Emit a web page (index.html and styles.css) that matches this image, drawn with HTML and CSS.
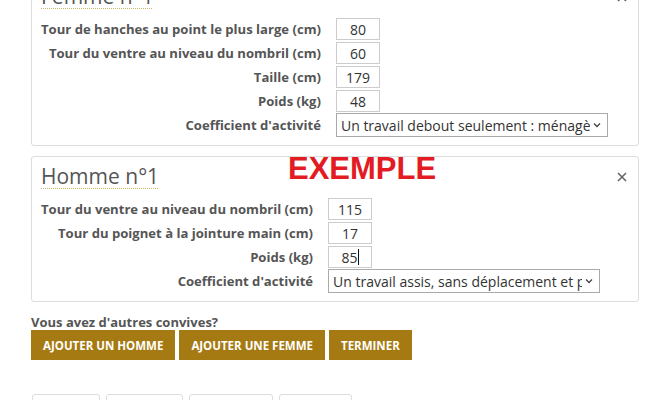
FILE: index.html
```html
<!DOCTYPE html>
<html lang="fr">
<head>
<meta charset="utf-8">
<title>Convives</title>
<link rel="stylesheet" href="styles.css">
</head>
<body>
<main class="page">
  <section class="card card-first">
    <h2 class="title"><span class="title-text">Femme n°1</span></h2>
    <span class="close"><svg width="10" height="10" viewBox="0 0 10 10"><path d="M1 1L9 9M9 1L1 9" stroke="#666" stroke-width="1.6" fill="none"/></svg></span>
    <table class="fields">
      <tr><td class="lbl">Tour de hanches au point le plus large (cm)</td><td><span class="num">80</span></td></tr>
      <tr><td class="lbl">Tour du ventre au niveau du nombril (cm)</td><td><span class="num">60</span></td></tr>
      <tr><td class="lbl">Taille (cm)</td><td><span class="num">179</span></td></tr>
      <tr><td class="lbl">Poids (kg)</td><td><span class="num">48</span></td></tr>
      <tr><td class="lbl">Coefficient d'activité</td><td><span class="select"><span class="select-text">Un travail debout seulement : ménagère, vendeur</span><svg class="chev" width="8" height="6" viewBox="0 0 8 6"><path d="M1 1.5L4 4.5L7 1.5" stroke="#444" stroke-width="1.3" fill="none"/></svg></span></td></tr>
    </table>
  </section>

  <section class="card">
    <h2 class="title"><span class="title-text">Homme n°1</span></h2>
    <span class="stamp">EXEMPLE</span>
    <span class="close"><svg width="10" height="10" viewBox="0 0 10 10"><path d="M1 1L9 9M9 1L1 9" stroke="#666" stroke-width="1.6" fill="none"/></svg></span>
    <table class="fields">
      <tr><td class="lbl">Tour du ventre au niveau du nombril (cm)</td><td><span class="num">115</span></td></tr>
      <tr><td class="lbl">Tour du poignet à la jointure main (cm)</td><td><span class="num">17</span></td></tr>
      <tr><td class="lbl">Poids (kg)</td><td><span class="num">85<span class="caret"></span></span></td></tr>
      <tr><td class="lbl">Coefficient d'activité</td><td><span class="select"><span class="select-text">Un travail assis, sans déplacement et peu d'effort</span><svg class="chev" width="8" height="6" viewBox="0 0 8 6"><path d="M1 1.5L4 4.5L7 1.5" stroke="#444" stroke-width="1.3" fill="none"/></svg></span></td></tr>
    </table>
  </section>

  <p class="more">Vous avez d'autres convives?</p>
  <div class="actions">
    <span class="btn">AJOUTER UN HOMME</span>
    <span class="btn">AJOUTER UNE FEMME</span>
    <span class="btn">TERMINER</span>
  </div>

  <div class="tabs">
    <span class="tab t1"></span>
    <span class="tab t2"></span>
    <span class="tab t3"></span>
    <span class="tab t4"></span>
  </div>
</main>
</body>
</html>
```

FILE: styles.css
```css
* { box-sizing: border-box; }
html, body { margin: 0; padding: 0; background: #fff; }
body {
  font-family: "Open Sans", "Noto Sans", sans-serif;
  color: #555;
  width: 660px;
  height: 400px;
  overflow: hidden;
}
.page {
  padding-left: 31px;
  width: 639px;
}
.card {
  position: relative;
  border: 1px solid #ddd;
  border-radius: 3px;
  padding: 4px 9px 8px 9px;
  margin-bottom: 10px;
}
.card-first { margin-top: -24px; }
.title {
  margin: 0 0 6px 0;
  font-size: 21px;
  line-height: 30px;
  font-weight: 400;
  color: #555;
}
.title-text {
  text-decoration: underline dotted #cbb865;
  text-decoration-thickness: 1px;
  text-underline-offset: 4px;
}
.close {
  position: absolute;
  top: 15px;
  right: 11px;
  width: 10px;
  height: 10px;
  display: block;
}
.close svg { display: block; }
.stamp {
  position: absolute;
  left: 256px;
  top: -4px;
  font-family: "Liberation Sans", Arial, sans-serif;
  font-weight: 700;
  font-size: 31px;
  line-height: 31px;
  color: #e31b23;
}
.fields {
  border-collapse: collapse;
}
.fields td {
  padding: 0;
  height: 24px;
  vertical-align: middle;
}
.fields .lbl {
  text-align: right;
  padding-right: 15px;
  font-weight: 700;
  font-size: 13.1px;
  color: #555;
  white-space: nowrap;
}
.num {
  display: flex;
  align-items: center;
  justify-content: center;
  width: 44px;
  height: 22px;
  border: 1px solid #ccc;
  font-size: 14px;
  color: #333;
}
.caret {
  display: inline-block;
  width: 1px;
  height: 16px;
  background: #111;
}
.select {
  display: flex;
  align-items: center;
  width: 272px;
  height: 24px;
  border: 1px solid #aaa;
  padding: 0 6px 0 4px;
  font-size: 14px;
  color: #333;
  background: #fff;
}
.select-text {
  flex: 1;
  overflow: hidden;
  white-space: nowrap;
}
.chev { flex: none; margin-left: 3px; }
.more {
  margin: 12px 0 0 0;
  font-size: 13px;
  line-height: 16px;
  font-weight: 700;
  color: #555;
}
.actions {
  display: flex;
  gap: 4px;
}
.btn {
  display: flex;
  align-items: center;
  height: 30px;
  padding: 0 12px;
  background: #a67a12;
  color: #fff;
  font-weight: 700;
  font-size: 11.5px;
  letter-spacing: 0;
}
.tabs {
  display: flex;
  gap: 6px;
  margin-top: 34px;
  padding-left: 1px;
}
.tab {
  display: block;
  height: 20px;
  border: 1px solid #ddd;
  border-radius: 3px 3px 0 0;
}
.t1 { width: 68px; }
.t2 { width: 77px; }
.t3 { width: 84px; }
.t4 { width: 73px; }
```
